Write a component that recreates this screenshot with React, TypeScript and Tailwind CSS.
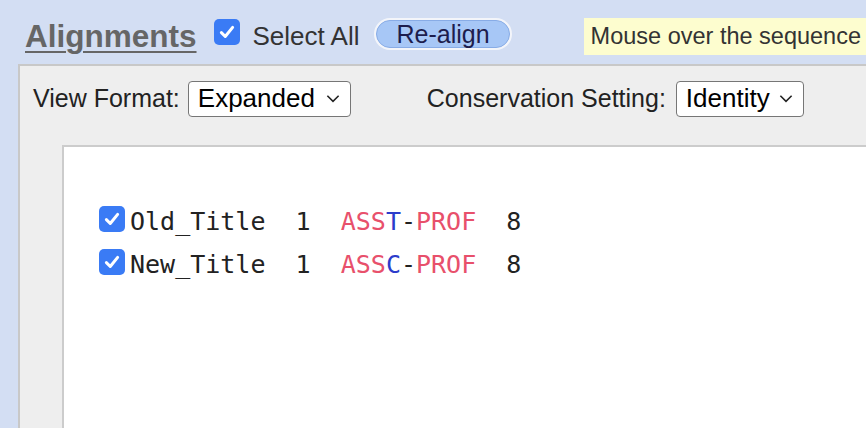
import React from 'react'

const sans = 'font-["Liberation_Sans",Arial,sans-serif]'
const mono = 'font-["DejaVu_Sans_Mono","Liberation_Mono",monospace]'

// Mac-style checked checkbox
function Check() {
  return (
    <span className="flex h-[26px] w-[26px] shrink-0 items-center justify-center rounded-[5px] bg-[#3a7bf5]">
      <svg viewBox="0 0 16 16" className="h-[20px] w-[20px]">
        <path d="M3.5 8.5 L6.6 11.6 L12.5 4.3" fill="none" stroke="white" strokeWidth="2.4" strokeLinecap="round" strokeLinejoin="round" />
      </svg>
    </span>
  )
}

function FakeSelect({ value, width }: { value: string; width: string }) {
  return (
    <div className={`flex h-[36px] shrink-0 items-center justify-between rounded-[4px] border-[1.5px] border-[#767676] bg-white pl-[9px] pr-[10px] text-[26px] text-black ${width}`}>
      <span>{value}</span>
      <svg viewBox="0 0 12 8" className="h-[9px] w-[14px]">
        <path d="M1 1.5 L6 6.5 L11 1.5" fill="none" stroke="#222" strokeWidth="1.4" />
      </svg>
    </div>
  )
}

const rows = [
  { name: 'Old_Title', mid: 'T' },
  { name: 'New_Title', mid: 'C' },
]

export default function App() {
  return (
    <div className={`flex h-[428px] w-[866px] flex-col overflow-hidden bg-[#d3def3] ${sans}`}>
      {/* header bar */}
      <div className="flex h-[64px] shrink-0 items-start whitespace-nowrap pl-[25px] pt-[18px]">
        <span className="mt-[-2px] shrink-0 text-[31.5px] font-bold leading-[40px] text-[#666] underline decoration-[2px] underline-offset-[4px]">
          Alignments
        </span>
        <span className="ml-[17px] mt-[1px] shrink-0">
          <Check />
        </span>
        <span className="ml-[13px] shrink-0 text-[26px] leading-[36px] text-[#333]">Select All</span>
        <span className="ml-[15px] flex h-[32px] shrink-0 items-center rounded-full bg-[#f3f5fa] p-[2px]">
          <span className="flex h-full items-center rounded-full border border-[#88ace6] bg-[#a7c7f6] px-[19px] text-[25px] leading-none text-[#1d1d4d]">
            Re-align
          </span>
        </span>
        <div className="ml-[72px] flex h-[37px] flex-1 items-center overflow-hidden bg-[#fdfdcf] pl-[7px] text-[23.5px] text-[#333]">
          Mouse over the sequence
        </div>
      </div>

      {/* outer panel */}
      <div className="ml-[18px] flex flex-1 flex-col border-l-2 border-t-2 border-[#c8c8c8] bg-[#eeeeee]">
        <div className="flex items-center whitespace-nowrap pl-[13px] pt-[14px] text-[25px] text-[#222]">
          <span>View Format:</span>
          <span className="ml-[8px]">
            <FakeSelect value="Expanded" width="w-[163px]" />
          </span>
          <span className="ml-[76px]">Conservation Setting:</span>
          <span className="ml-[10px]">
            <FakeSelect value="Identity" width="w-[128px]" />
          </span>
        </div>

        {/* alignment view */}
        <div className="ml-[42px] mt-[27px] flex-1 border-l-2 border-t-2 border-[#cccccc] bg-white pl-[35px] pt-[53px]">
          {rows.map((r) => (
            <div key={r.name} className="flex h-[43px] items-center">
              <span className="mt-[-5px]">
                <Check />
              </span>
              <span className={`ml-[5px] whitespace-pre text-[25px] leading-[43px] text-[#222] ${mono}`}>
                {r.name}
                {'  1  '}
                <span className="text-[#e8506b]">ASS</span>
                <span className="text-[#2c3ccb]">{r.mid}</span>
                <span className="text-[#222]">-</span>
                <span className="text-[#e8506b]">PROF</span>
                {'  8'}
              </span>
            </div>
          ))}
        </div>
      </div>
    </div>
  )
}
